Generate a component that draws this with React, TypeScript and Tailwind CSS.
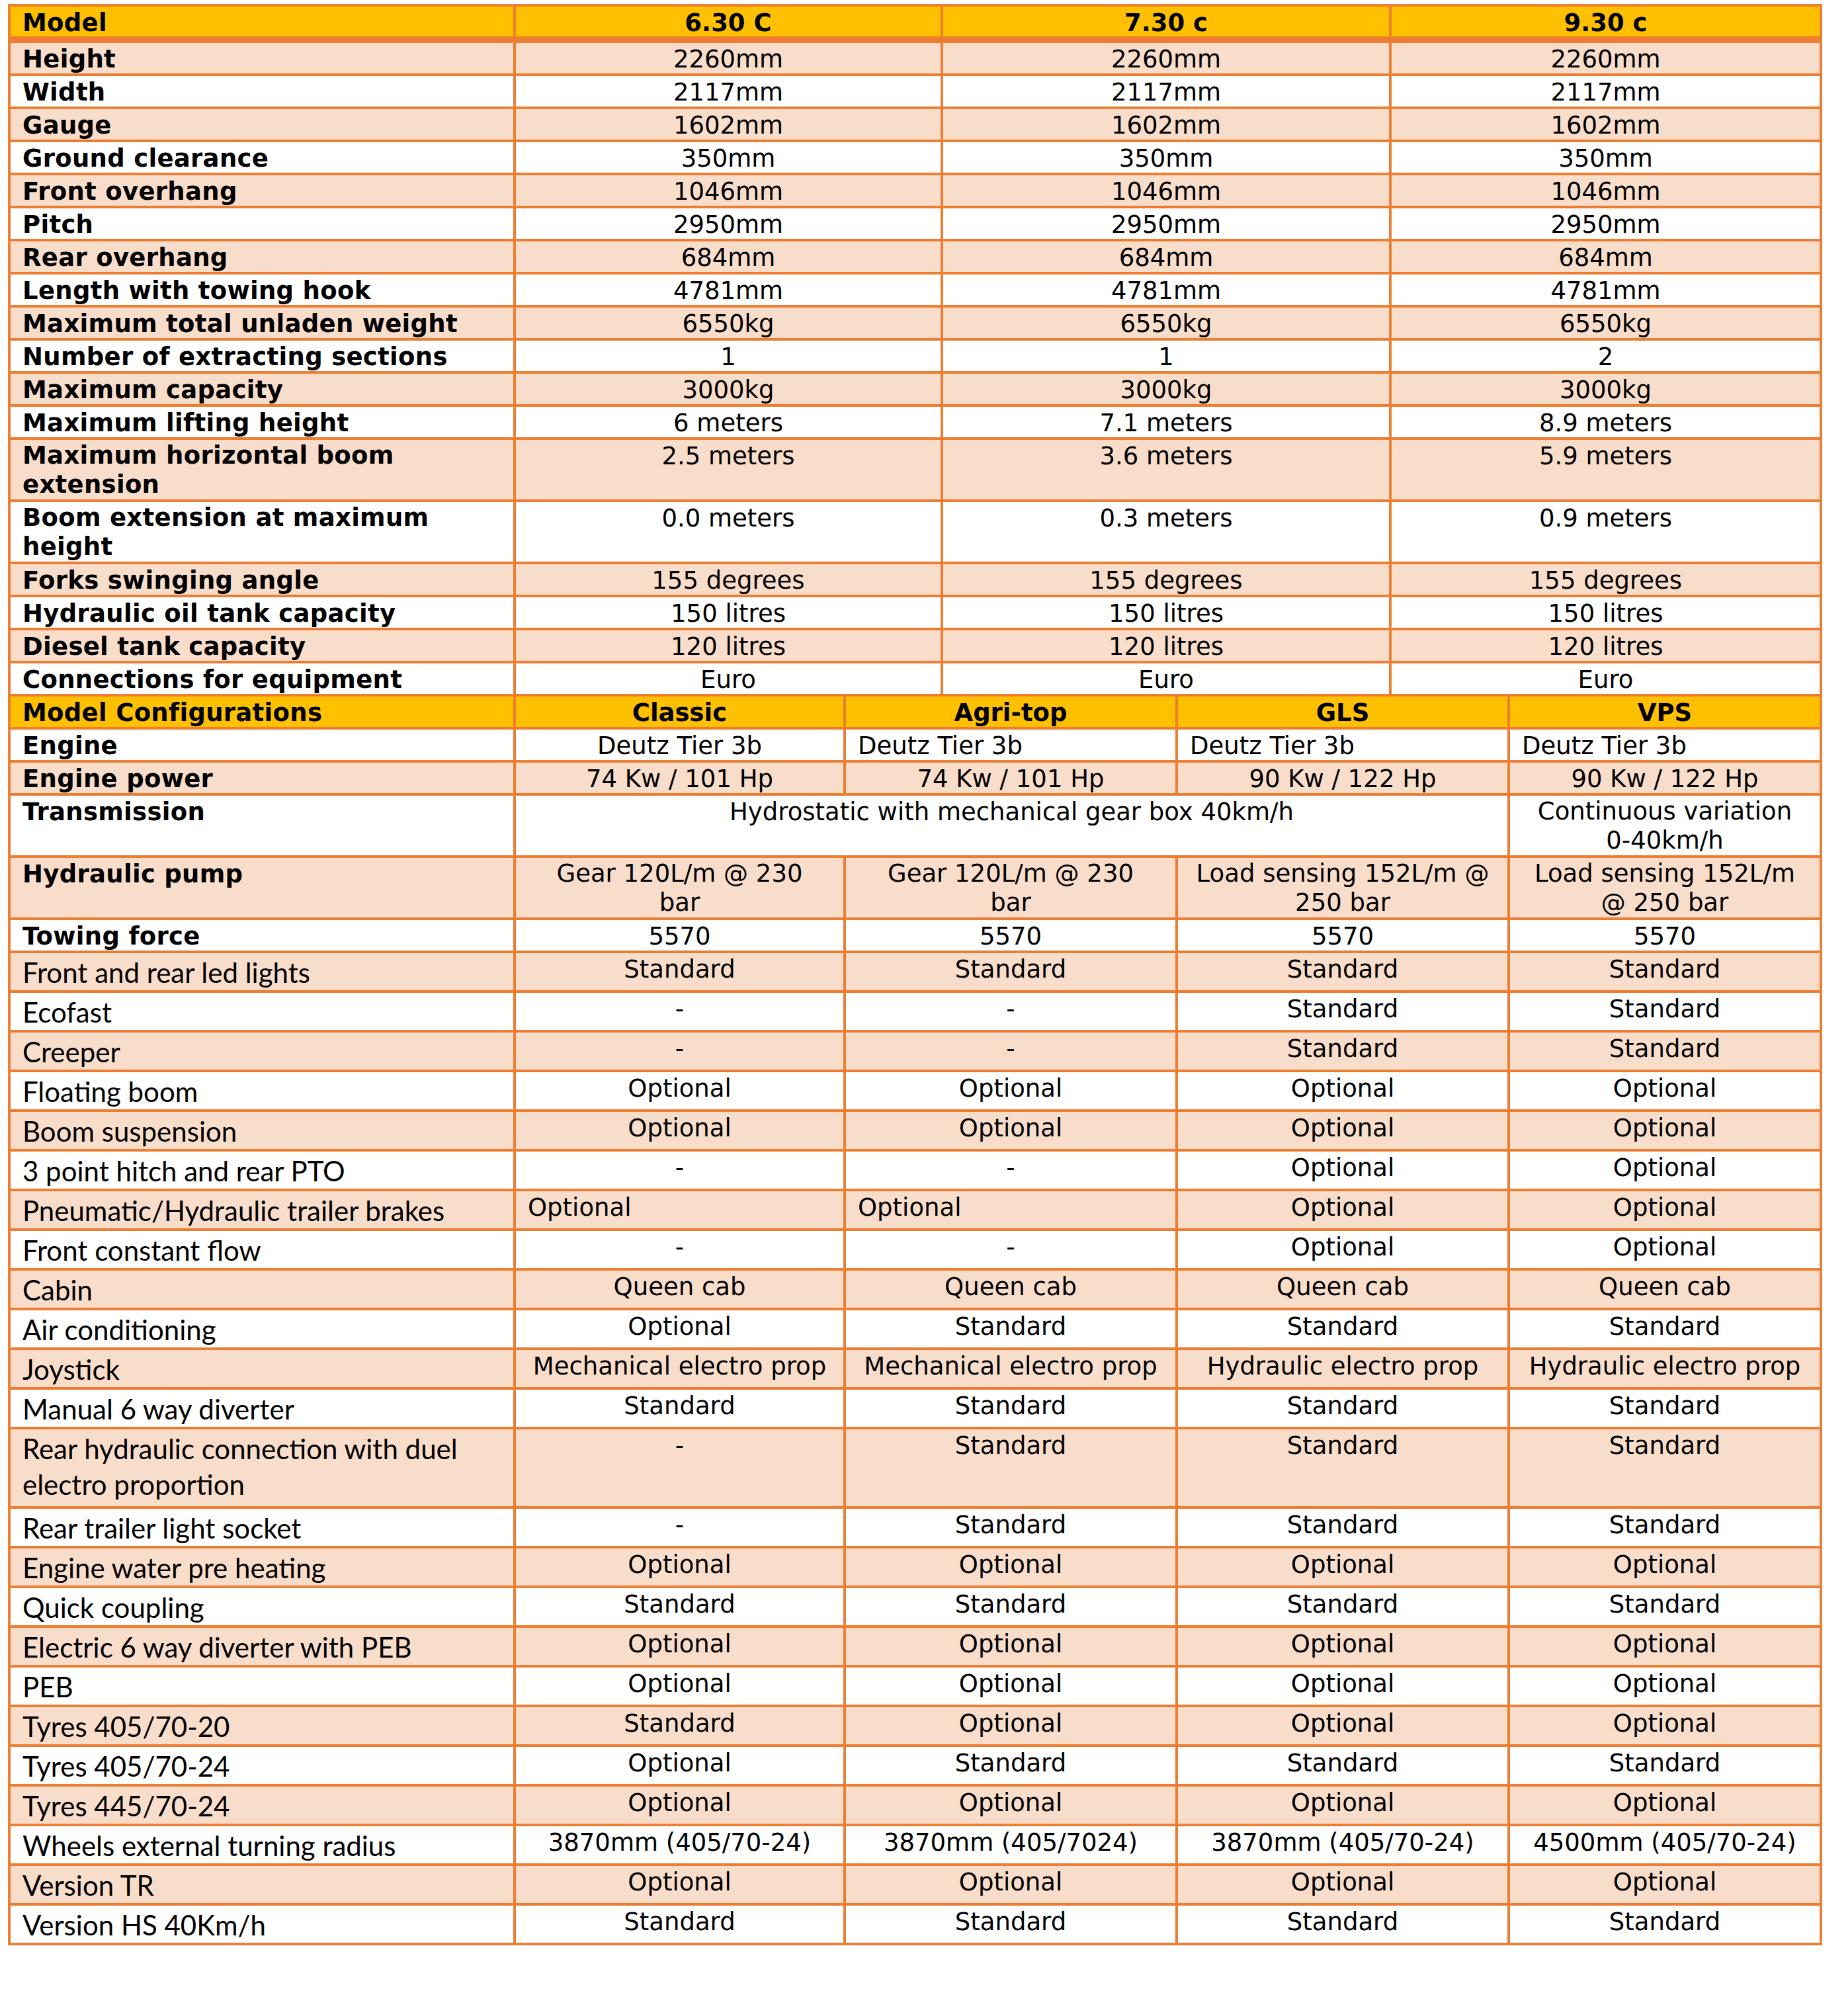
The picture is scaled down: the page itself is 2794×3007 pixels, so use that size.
import React from 'react'

type Val = string | { t: React.ReactNode; left?: boolean; span3?: boolean; multi?: boolean }

const line = 'border-r-4 border-b-4 border-[#ED7D31]'
const face = "font-['DejaVu_Sans',Verdana,sans-serif] text-[37px] px-[18px] text-black"
const oneLine = 'pt-[4px] leading-[42px]'
const twoLine = 'pt-[2px] leading-[44px]'
const calibri = "font-['Lato',sans-serif] text-[42px] leading-[54px] pt-[2px] px-[18px] text-black"

const topRows: [React.ReactNode, string[], boolean?][] = [
  ['Height', ['2260mm', '2260mm', '2260mm']],
  ['Width', ['2117mm', '2117mm', '2117mm']],
  ['Gauge', ['1602mm', '1602mm', '1602mm']],
  ['Ground clearance', ['350mm', '350mm', '350mm']],
  ['Front overhang', ['1046mm', '1046mm', '1046mm']],
  ['Pitch', ['2950mm', '2950mm', '2950mm']],
  ['Rear overhang', ['684mm', '684mm', '684mm']],
  ['Length with towing hook', ['4781mm', '4781mm', '4781mm']],
  ['Maximum total unladen weight', ['6550kg', '6550kg', '6550kg']],
  ['Number of extracting sections', ['1', '1', '2']],
  ['Maximum capacity', ['3000kg', '3000kg', '3000kg']],
  ['Maximum lifting height', ['6 meters', '7.1 meters', '8.9 meters']],
  [<>Maximum horizontal boom<br />extension</>, ['2.5 meters', '3.6 meters', '5.9 meters'], true],
  [<>Boom extension at maximum<br />height</>, ['0.0 meters', '0.3 meters', '0.9 meters'], true],
  ['Forks swinging angle', ['155 degrees', '155 degrees', '155 degrees']],
  ['Hydraulic oil tank capacity', ['150 litres', '150 litres', '150 litres']],
  ['Diesel tank capacity', ['120 litres', '120 litres', '120 litres']],
  ['Connections for equipment', ['Euro', 'Euro', 'Euro']],
]

// rows of the configuration block still labelled in bold
const boldConfig: [string, Val[]][] = [
  ['Engine', ['Deutz Tier 3b', { t: 'Deutz Tier 3b', left: true }, { t: 'Deutz Tier 3b', left: true }, { t: 'Deutz Tier 3b', left: true }]],
  ['Engine power', ['74 Kw / 101 Hp', '74 Kw / 101 Hp', '90 Kw / 122 Hp', '90 Kw / 122 Hp']],
  ['Transmission', [{ t: 'Hydrostatic with mechanical gear box 40km/h', span3: true }, { t: <>Continuous variation<br />0-40km/h</>, multi: true }]],
  ['Hydraulic pump', [
    { t: <>Gear 120L/m @ 230<br />bar</>, multi: true },
    { t: <>Gear 120L/m @ 230<br />bar</>, multi: true },
    { t: <>Load sensing 152L/m @<br />250 bar</>, multi: true },
    { t: <>Load sensing 152L/m<br />@ 250 bar</>, multi: true },
  ]],
  ['Towing force', ['5570', '5570', '5570', '5570']],
]

const S = 'Standard'
const O = 'Optional'
const options: [React.ReactNode, Val[]][] = [
  ['Front and rear led lights', [S, S, S, S]],
  ['Ecofast', ['-', '-', S, S]],
  ['Creeper', ['-', '-', S, S]],
  ['Floating boom', [O, O, O, O]],
  ['Boom suspension', [O, O, O, O]],
  ['3 point hitch and rear PTO', ['-', '-', O, O]],
  ['Pneumatic/Hydraulic trailer brakes', [{ t: O, left: true }, { t: O, left: true }, O, O]],
  ['Front constant flow', ['-', '-', O, O]],
  ['Cabin', ['Queen cab', 'Queen cab', 'Queen cab', 'Queen cab']],
  ['Air conditioning', [O, S, S, S]],
  ['Joystick', ['Mechanical electro prop', 'Mechanical electro prop', 'Hydraulic electro prop', 'Hydraulic electro prop']],
  ['Manual 6 way diverter', [S, S, S, S]],
  [<>Rear hydraulic connection with duel<br />electro proportion</>, ['-', S, S, S]],
  ['Rear trailer light socket', ['-', S, S, S]],
  ['Engine water pre heating', [O, O, O, O]],
  ['Quick coupling', [S, S, S, S]],
  ['Electric 6 way diverter with PEB', [O, O, O, O]],
  ['PEB', [O, O, O, O]],
  ['Tyres 405/70-20', [S, O, O, O]],
  ['Tyres 405/70-24', [O, S, S, S]],
  ['Tyres 445/70-24', [O, O, O, O]],
  ['Wheels external turning radius', ['3870mm (405/70-24)', '3870mm (405/7024)', '3870mm (405/70-24)', '4500mm (405/70-24)']],
  ['Version TR', [O, O, O, O]],
  ['Version HS 40Km/h', [S, S, S, S]],
]

function ValueCell({ v, shade }: { v: Val; shade: string }) {
  const item = typeof v === 'string' ? { t: v } : v
  return (
    <div
      className={[
        line,
        face,
        'multi' in item && item.multi ? twoLine : oneLine,
        shade,
        'left' in item && item.left ? 'text-left' : 'text-center',
        'span3' in item && item.span3 ? 'col-span-3' : '',
      ].join(' ')}
    >
      {item.t}
    </div>
  )
}

export default function App() {
  return (
    <div className="min-h-screen bg-white pl-[12px] pt-[6px]">
      {/* machine dimensions */}
      <div className="grid w-fit grid-cols-[764px_646px_678px_651px] border-l-4 border-t-4 border-[#ED7D31]">
        <div className={`border-r-4 border-b-[10px] border-[#ED7D31] bg-[#FFC000] font-bold tracking-[0.3px] ${face} pt-[4px] leading-[41px]`}>
          Model
        </div>
        {['6.30 C', '7.30 c', '9.30 c'].map((m) => (
          <div key={m} className={`border-r-4 border-b-[10px] border-[#ED7D31] bg-[#FFC000] text-center font-bold ${face} pt-[4px] leading-[41px]`}>
            {m}
          </div>
        ))}
        {topRows.map(([label, vals, multi], i) => {
          const shade = i % 2 === 0 ? 'bg-[#F9DDCB]' : 'bg-white'
          return (
            <React.Fragment key={i}>
              <div className={`${line} ${face} ${multi ? twoLine : oneLine} ${shade} font-bold tracking-[0.3px]`}>{label}</div>
              {vals.map((v, j) => (
                <ValueCell key={j} v={v} shade={shade} />
              ))}
            </React.Fragment>
          )
        })}
      </div>

      {/* configurations */}
      <div className="grid w-fit grid-cols-[764px_499px_502px_502px_472px] border-l-4 border-[#ED7D31]">
        <div className={`${line} ${face} ${oneLine} bg-[#FFC000] font-bold tracking-[0.3px]`}>Model Configurations</div>
        {['Classic', 'Agri-top', 'GLS', 'VPS'].map((m) => (
          <div key={m} className={`${line} ${face} ${oneLine} bg-[#FFC000] text-center font-bold`}>
            {m}
          </div>
        ))}
        {boldConfig.map(([label, vals], i) => {
          const shade = i % 2 === 0 ? 'bg-white' : 'bg-[#F9DDCB]'
          return (
            <React.Fragment key={label}>
              <div className={`${line} ${face} ${oneLine} ${shade} font-bold tracking-[0.3px]`}>{label}</div>
              {vals.map((v, j) => (
                <ValueCell key={j} v={v} shade={shade} />
              ))}
            </React.Fragment>
          )
        })}
        {options.map(([label, vals], i) => {
          const shade = i % 2 === 0 ? 'bg-[#F9DDCB]' : 'bg-white'
          const tall = i === 12
          return (
            <React.Fragment key={i}>
              <div className={`${line} ${calibri} ${shade} ${tall ? 'pb-[6px]' : ''}`}>{label}</div>
              {vals.map((v, j) => (
                <ValueCell key={j} v={v} shade={shade} />
              ))}
            </React.Fragment>
          )
        })}
      </div>
    </div>
  )
}
